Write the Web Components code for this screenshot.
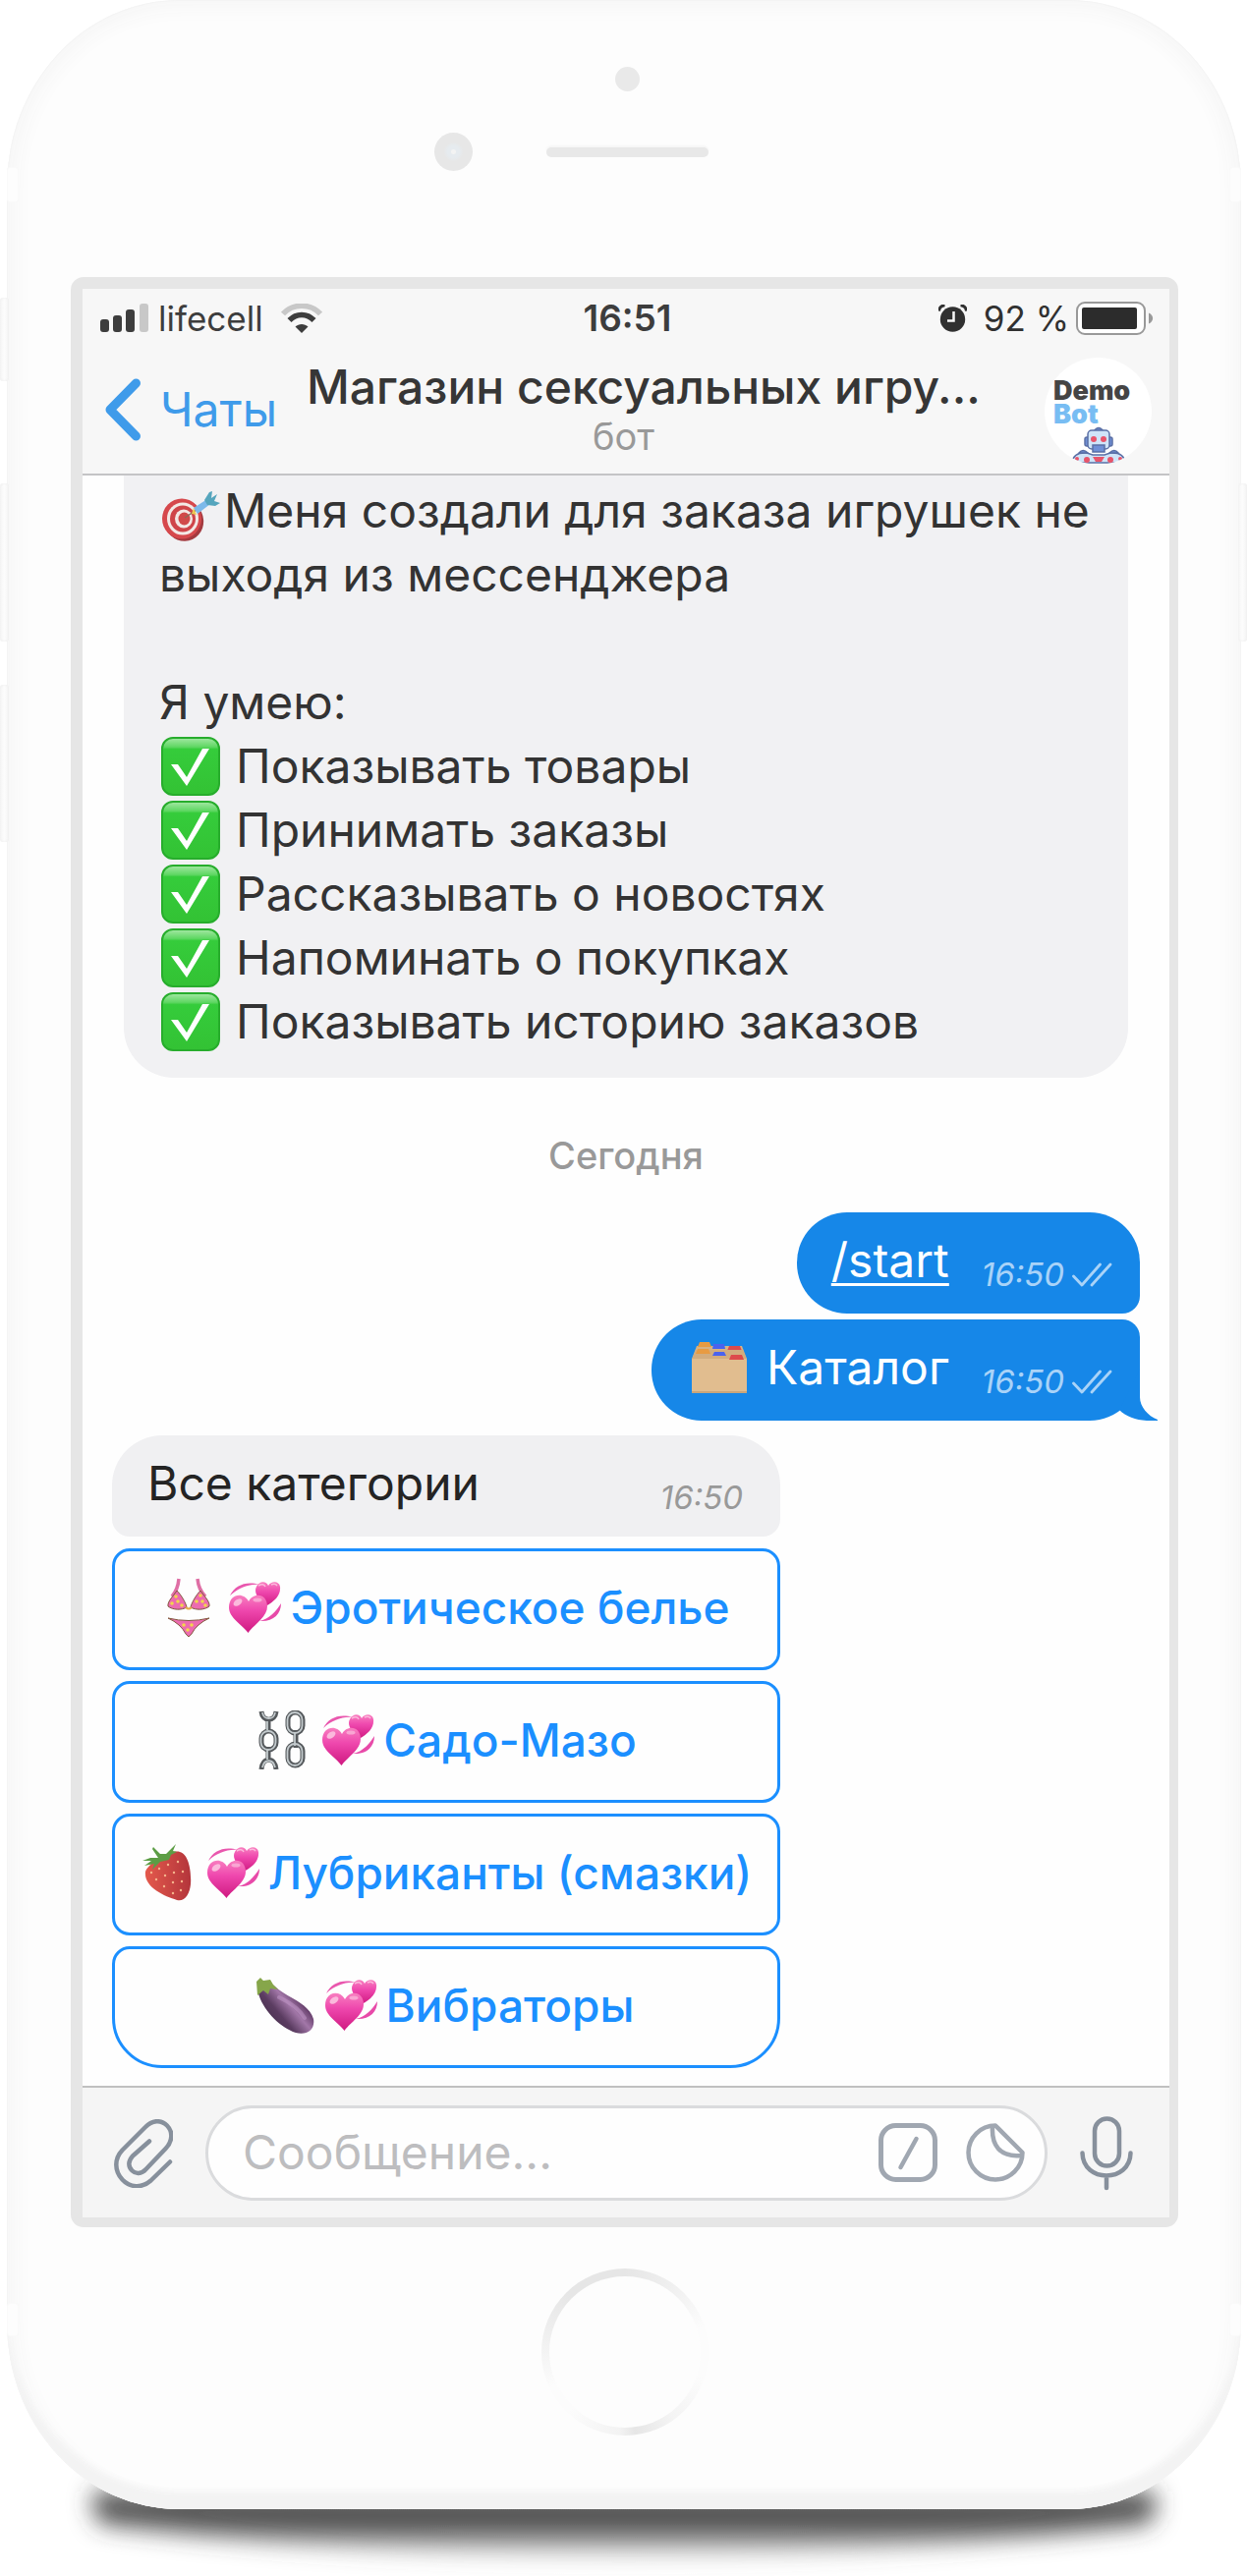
<!DOCTYPE html>
<html lang="ru">
<head>
<meta charset="utf-8">
<meta name="viewport" content="width=device-width, initial-scale=1">
<title>Чат с ботом</title>
<style>
  html { background: #fff; }
  body { margin: 0; font-family: Inter, "Liberation Sans", sans-serif; color: #2e2e2e; }
</style>
</head>
<body>
<phone-frame>
  <status-bar slot="top" carrier="lifecell" time="16:51" battery="92 %"></status-bar>
  <chat-header slot="top" back="Чаты" subtitle="бот">Магазин сексуальных игру...</chat-header>

  <chat-bubble kind="intro">
    <intro-text></intro-text>
  </chat-bubble>
  <day-label>Сегодня</day-label>
  <chat-bubble kind="out" time="16:50"><a href="#start" style="color:inherit;text-decoration-thickness:3px;text-underline-offset:6px">/start</a></chat-bubble>
  <chat-bubble kind="out" last time="16:50" icon="folder">Каталог</chat-bubble>
  <chat-bubble kind="in" time="16:50">Все категории</chat-bubble>
  <inline-keyboard>
    <key-button icon="bikini">Эротическое белье</key-button>
    <key-button icon="chains">Садо-Мазо</key-button>
    <key-button icon="strawberry">Лубриканты (смазки)</key-button>
    <key-button icon="eggplant" last>Вибраторы</key-button>
  </inline-keyboard>

  <message-composer slot="bottom"></message-composer>
</phone-frame>

<script>
const ICONS = {
  signal: [49, 30, `<g fill="#3d3d3d"><rect x="0" y="16" width="9" height="13" rx="3"/><rect x="13" y="12" width="9" height="17" rx="3"/><rect x="26" y="6" width="9" height="23" rx="3"/></g><rect x="40" y="0" width="9" height="29" rx="3" fill="#c8c8c8"/>`],
  wifi: [42, 30, `<path d="M2 10.500C12-.5 30-.5 40 10.500" fill="none" stroke="#c8c8c8" stroke-width="5.500"/><path d="M8.500 17C15.500 9.500 26.500 9.500 33.500 17" fill="none" stroke="#3d3d3d" stroke-width="5.500"/><path d="M21 30L14.500 23.500C18 20 24 20 27.500 23.500Z" fill="#3d3d3d"/>`],
  alarm: [29, 28, `<circle cx="14.500" cy="15" r="12.700" fill="#303030"/><path d="M.5 6.500C1 3 3.500 1 6.500.8M28.500 6.500C28 3 25.500 1 22.500.8" fill="none" stroke="#303030" stroke-width="3"/><path d="M15.500 7v9.500H9" fill="none" stroke="#f7f7f7" stroke-width="2.500"/>`],
  battery: [80, 34, `<rect x="1" y="1" width="69" height="32" rx="8" fill="#fff" stroke="#999" stroke-width="2"/><rect x="6" y="6" width="56" height="22" rx="2" fill="#2c2c2c"/><path d="M74 11.500C79.500 14 79.500 20 74 22.500Z" fill="#999"/>`],
  back: [38, 64, `<path d="M32.500 5L6 32L32.500 59" fill="none" stroke="#3f9bea" stroke-width="9" stroke-linecap="round" stroke-linejoin="round"/>`],
  check: [60, 60, `<defs><linearGradient id="g" x1="0" y1="0" x2="0" y2="1"><stop offset="0" stop-color="#a5e8a5"/><stop offset=".16" stop-color="#5fd763"/><stop offset=".2" stop-color="#35cc3b"/><stop offset="1" stop-color="#33c234"/></linearGradient></defs><rect x="1" y="1" width="58" height="58" rx="11" fill="url(#g)" stroke="#27ad2c" stroke-width="2"/><path d="M10 28H17L26 41L42 12H49L26 50Z" fill="#fff"/>`],
  dart: [60, 52, `<ellipse cx="23" cy="30" rx="20" ry="21" transform="rotate(-25 23 30)" fill="#a33a3f"/><ellipse cx="21" cy="28" rx="20" ry="20.500" fill="#d6484c"/><ellipse cx="22" cy="28" rx="16" ry="16.500" fill="#f3e9e6"/><ellipse cx="22" cy="28" rx="13" ry="13.500" fill="#cf4549"/><ellipse cx="23" cy="28" rx="9" ry="9.500" fill="#f3e9e6"/><ellipse cx="23.500" cy="28" rx="6" ry="6.500" fill="#d14a4a"/><path d="M24 27L36 19" stroke="#8a6a58" stroke-width="1.500"/><path d="M31 23L33 17L36 24Z" fill="#ecc951"/><path d="M33 17L47 8L50 13L37 23Z" fill="#7cb9ea"/><path d="M44 9L49 1L52 0L51 7L57 3L54 10L60 12L55 15L47 14Z" fill="#55a5bd"/>`],
  folder: [56, 52, `<path d="M5 4H51L56 17V52H0V17Z" fill="#d8b283"/><path d="M8 0H18L20 5H6Z" fill="#e89b42"/><path d="M22 2H33L34 7H21Z" fill="#4a63ef"/><path d="M38 4H49L51 9H36Z" fill="#dd4a4c"/><path d="M4 8H52L56 18H0Z" fill="#d2ac7e"/><path d="M6 7H17L19 12H4Z" fill="#e89b42"/><path d="M23 10H33L35 14H21Z" fill="#4a63ef"/><rect y="17" width="56" height="35" rx="1" fill="#e1bd8f"/><path d="M40 13H51L53 18H38Z" fill="#dd4a4c"/><path d="M0 51H56" stroke="#c9a57a" stroke-width="2"/>`],
  hearts: [53, 52, `<defs><linearGradient id="h" x1="0" y1="0" x2="0" y2="1"><stop offset="0" stop-color="#f87fc0"/><stop offset=".4" stop-color="#ef48ae"/><stop offset="1" stop-color="#cf1880"/></linearGradient></defs><path d="M1 14C6 4 17-1 31 3C20 2 10 6 1 14Z" fill="#e957ae"/><path d="M31 40C41 38 48 30 53 22C53 33 45 41 31 40Z" fill="#e84aa9"/><path d="M37 25C29 17 25 10 28 5C31-1 38-1 40 4C43-1 51-1 52 5C53 13 47 20 37 25Z" fill="url(#h)"/><path d="M19.500 52C13 43 0 37 0 26C0 12 15 10 20 20C25 10 39 12 39 25C39 36 26 43 19.500 52Z" fill="url(#h)"/><ellipse cx="9" cy="21" rx="5" ry="3" transform="rotate(-35 9 21)" fill="#fbb9dc"/><ellipse cx="29" cy="18.500" rx="4.500" ry="2" fill="#f9a6d3"/><path d="M30 4Q35 1 37 5M43 3Q47 1 49 4" fill="none" stroke="#fbb9dc" stroke-width="1.500"/>`],
  bikini: [44, 60, `<path d="M12 1Q11 12 5 19M31 1Q32 12 39 19" fill="none" stroke="#df6fa5" stroke-width="3.500"/><path d="M10 13C14 17 19 25 20 30C15 33 6 33 1 29C0 24 7 18 10 13ZM34 13C30 17 25 25 24 30C29 33 38 33 43 29C44 24 37 18 34 13Z" fill="#ec6bb0" stroke="#84583f" stroke-width="1"/><path d="M19 30Q22 33 25 30" fill="none" stroke="#e3ad4a" stroke-width="2"/><path d="M1 41Q22 46 43 41Q30 47 25 57L22 60L19 57Q14 47 1 41Z" fill="#ec6bb0" stroke="#84583f" stroke-width="1"/><g fill="#f3d64b"><circle cx="9" cy="19" r="1.800"/><circle cx="5" cy="26" r="1.800"/><circle cx="11" cy="24" r="1.800"/><circle cx="15" cy="28" r="1.800"/><circle cx="34" cy="18" r="1.800"/><circle cx="30" cy="24" r="1.800"/><circle cx="36" cy="24" r="1.800"/><circle cx="39" cy="28" r="1.800"/><circle cx="17" cy="48" r="1.800"/><circle cx="25" cy="48" r="1.800"/><circle cx="21" cy="53" r="1.800"/></g>`],
  chains: [48, 60, `<g fill="none" stroke="#55595c" stroke-width="5"><path d="M3 1C4 12 17 12 18 1M10 8V22"/><rect x="3" y="21" width="15" height="19" rx="7.500"/><path d="M10 37V52M3 60C4 47 17 47 18 60"/><rect x="30" y="2" width="15" height="21" rx="7.500"/><path d="M38 20V38"/><rect x="30" y="34" width="15" height="22" rx="7.500"/></g><g fill="none" stroke="#c3cacd" stroke-width="1.800"><path d="M4 2C5 10 16 10 17 2M9 11V20"/><rect x="2.500" y="21" width="15" height="19" rx="7.500"/><path d="M9 40V50M4 58C6 49 15 49 17 58"/><rect x="29.500" y="2" width="15" height="21" rx="7.500"/><path d="M37 23V36"/><rect x="29.500" y="34" width="15" height="22" rx="7.500"/></g>`],
  strawberry: [50, 58, `<defs><linearGradient id="s"><stop offset="0" stop-color="#e4594c"/><stop offset="1" stop-color="#b3353b"/></linearGradient></defs><path d="M3 28C8 17 30 5 38 8C47 10 50 28 49 41C48 51 43 59 35 57C22 53 1 44 3 28Z" fill="url(#s)"/><path d="M0 17L9 17L2 22L12 20L10 26L18 18L27 16L29 11L35 8L31 7L34 0L24 10L18 10L11 3L10 5L16 14L8 14Z" fill="#5c9d45"/><g fill="#f5b58d"><circle cx="9" cy="29" r="1.200"/><circle cx="17" cy="25" r="1.200"/><circle cx="26" cy="21" r="1.200"/><circle cx="36" cy="18" r="1.200"/><circle cx="14" cy="36" r="1.200"/><circle cx="23" cy="32" r="1.200"/><circle cx="32" cy="29" r="1.200"/><circle cx="41" cy="28" r="1.200"/><circle cx="22" cy="43" r="1.200"/><circle cx="31" cy="39" r="1.200"/><circle cx="40" cy="38" r="1.200"/><circle cx="31" cy="50" r="1.200"/><circle cx="39" cy="47" r="1.200"/></g>`],
  eggplant: [60, 57, `<defs><linearGradient id="e" x1="0" y1="1" x2=".8" y2=".4"><stop offset="0" stop-color="#34253b"/><stop offset=".55" stop-color="#5b3c61"/><stop offset=".8" stop-color="#a277a8"/><stop offset="1" stop-color="#67406c"/></linearGradient></defs><path d="M2 12C5 6 15 4 20 9C31 20 54 25 59 42C61 53 52 59 41 56C23 50 5 30 2 12Z" fill="url(#e)"/><path d="M1 4L5 0L8 3L15 2L18 7L23 12L15 11L13 17L8 13L2 18Z" fill="#86a64a"/><path d="M24 20Q43 29 50 41" stroke="#c49aca" stroke-width="4" fill="none" opacity=".5" stroke-linecap="round"/>`],
  ticks: [41, 25, `<path d="M1.500 14L10 23L28.500 2M20 23L39 2" fill="none" stroke="#a9d3f8" stroke-width="2.800" stroke-linecap="round" stroke-linejoin="round"/>`],
  clip: [60, 70, `<path d="M57 43.500L37.500 62.500C28 71 16 69.500 8.500 61.500C0 52 .5 40 8.500 31.500L32 8C39 .5 48 .5 54 6.500C60 12.500 60 22 52.500 30L32.500 51C28 56 22 56 18.500 52.500C14 48 14.500 42.500 19 37.500L36 22.500" fill="none" stroke="#87909c" stroke-width="4.500" stroke-linecap="round" stroke-linejoin="round"/>`],
  slash: [60, 60, `<rect x="2.500" y="2.500" width="55" height="55" rx="15" fill="none" stroke="#a0a7b1" stroke-width="5"/><path d="M38.500 16L22.500 45" stroke="#a0a7b1" stroke-width="4.500" stroke-linecap="round"/>`],
  sticker: [60, 60, `<path d="M30 2.500A27.500 27.500 0 1 0 57.500 30Z" fill="none" stroke="#a0a7b1" stroke-width="4.500" stroke-linejoin="round"/><path d="M27 4C26 22 34 35 56 33" fill="none" stroke="#a0a7b1" stroke-width="4.500" stroke-linecap="round"/>`],
  mic: [54, 76, `<rect x="15" y="2.500" width="25" height="48" rx="12.500" fill="none" stroke="#87909c" stroke-width="4.500"/><path d="M2.500 37.500C3 68 51 68 51.500 37.500M27 61V73" fill="none" stroke="#87909c" stroke-width="4.500" stroke-linecap="round"/>`],
  tail: [48, 52, `<path d="M30 0V28C30 38 38 47 48 51V52C32 53 18 50 9 41Z" fill="#1687e8"/>`],
  robot: [56, 38, `<g stroke="#5a6fa5" stroke-width="1.500"><path d="M23 5Q28-2 33 5Z" fill="#6f8fd6"/><rect x="14" y="11" width="28" height="9" rx="2" fill="#6f8fd6"/><rect x="17" y="4" width="22" height="19" rx="4" fill="#cfe4f8"/><path d="M22 19H34V26H22Z" fill="#6f8fd6"/><path d="M1 37Q2 26 16 27L22 29H34L40 27Q54 26 55 37Z" fill="#cfe4f8"/><path d="M8 27Q12 22 17 27ZM39 27Q44 22 48 27Z" fill="#6f8fd6"/></g><g fill="#e8546a"><circle cx="23" cy="13" r="3"/><circle cx="33" cy="13" r="3"/><path d="M22 31H34L31 36H25Z"/><circle cx="16" cy="34" r="3"/><circle cx="40" cy="34" r="3"/><circle cx="6" cy="33" r="2"/><circle cx="50" cy="33" r="2"/></g>`],
  shadow: [1269, 130, `<defs><filter id="b" x="-10%" y="-60%" width="120%" height="240%"><feGaussianBlur stdDeviation="12"/></filter><linearGradient id="d" x1="0" y1="0" x2="0" y2="1"><stop offset="0" stop-color="#3c3c3c" stop-opacity=".9"/><stop offset=".6" stop-color="#3c3c3c" stop-opacity=".85"/><stop offset="1" stop-color="#777" stop-opacity=".15"/></linearGradient></defs><path d="M96 44Q90 74 110 78Q635 140 1160 78Q1182 74 1174 44Z" fill="url(#d)" filter="url(#b)"/>`]
};

function define(name, render) {
  customElements.define(name, class extends HTMLElement {
    connectedCallback() {
      if (this.shadowRoot) return;
      const t = document.createElement('template');
      t.innerHTML = render(this);
      this.attachShadow({ mode: 'open' }).append(t.content.cloneNode(true));
    }
  });
}

define('ui-icon', el => {
  const [w, h, body] = ICONS[el.getAttribute('name')];
  return `<style>:host{display:block;flex:none}svg{display:block}</style>
    <svg width="${w}" height="${h}" viewBox="0 0 ${w} ${h}" aria-hidden="true">${body}</svg>`;
});

define('phone-frame', () => `
  <style>
    :host { display: block; overflow: hidden; }
    .body { position: relative; z-index: 1; margin: 0 6px 0 7px; padding: 0 64px 0 65px;
      border-radius: 175px / 190px; background: #fdfdfd;
      box-shadow: inset 0 0 0 1px #f4f4f4, inset 0 -20px 6px -2px #f3f3f3, inset 0 0 20px 8px #f6f6f6; }
    .side, .band { position: absolute; width: 9px; border-radius: 3px; }
    .side { background: linear-gradient(90deg, #f6f6f6, #fcfcfc 50%, #f4f4f4); box-shadow: inset 0 0 3px #eee; }
    .side.l { left: -7px; } .side.r { right: -6px; }
    .band { width: 12px; background: #fdfdfd; box-shadow: inset 0 0 2px #f2f2f2; }
    .band.l { left: 0; } .band.r { right: 0; }
    .top { display: grid; grid-template-columns: 1fr 165px 1fr; row-gap: 42px; align-items: center;
      height: 282px; padding: 68px 0 0 5px; box-sizing: border-box; align-content: start; }
    .sensor { grid-column: 2; justify-self: center; width: 25px; height: 25px; border-radius: 50%; background: #e9e9e9; }
    .camera { grid-column: 1; justify-self: end; margin-right: 75px; width: 39px; height: 39px; border-radius: 50%;
      background: radial-gradient(circle, #f3f3f3 0 2px, #e6ebef 3px 6px, #e7e7e7 10px); }
    .speaker { height: 10px; border-radius: 5px; background: #e8e8e8; box-shadow: 0 -2px 2px #f6f6f6; }
    .screen { border: solid #e6e6e6; border-width: 12px 9px 10px 12px; border-radius: 13px; background: #fefefe; }
    main { display: flex; flex-direction: column; align-items: stretch; padding-bottom: 18px; }
    .bottom { display: flex; justify-content: center; padding: 42px 0 75px; }
    .home { width: 170px; height: 170px; box-sizing: border-box; padding: 8px; border: 0; border-radius: 50%;
      background: conic-gradient(#e6e6e6, #f2f2f2 12%, #fcfcfc 20% 30%, #f4f4f4 40%, #e6e6e6 48%, #f3f3f3 51%, #fcfcfc 62% 68%, #f0f0f0 78%, #e6e6e6 88%); }
    .home span { display: block; height: 100%; border-radius: 50%; background: #fdfdfd; }
    .shade { display: flex; justify-content: center; margin-top: -62px; }
  </style>
  <div class="body">
    <span class="side l" style="top:303px;height:85px"></span>
    <span class="side l" style="top:492px;height:161px"></span>
    <span class="side l" style="top:697px;height:160px"></span>
    <span class="side r" style="top:492px;height:161px"></span>
    <span class="band l" style="top:170px;height:36px"></span>
    <span class="band r" style="top:170px;height:36px"></span>
    <span class="band l" style="bottom:176px;height:34px"></span>
    <span class="band r" style="bottom:176px;height:34px"></span>
    <div class="top"><span class="sensor"></span><span class="camera"></span><span class="speaker"></span></div>
    <div class="screen">
      <slot name="top"></slot>
      <main><slot></slot></main>
      <slot name="bottom"></slot>
    </div>
    <div class="bottom"><button class="home" aria-label="Home"><span></span></button></div>
  </div>
  <div class="shade"><ui-icon name="shadow"></ui-icon></div>`);

define('status-bar', el => `
  <style>
    :host { display: grid; grid-template-columns: 1fr auto 1fr; align-items: center; height: 60px;
      padding: 0 15px 0 18px; background: #f7f7f7; font-size: 35px; line-height: 60px; color: #3d3d3d; }
    div { display: flex; align-items: center; }
    .l { gap: 10px; } .r { justify-content: flex-end; gap: 7px; color: #303030; }
    .l ui-icon + span { margin-right: 8px; }
    .r ui-icon:first-child { margin-right: 10px; }
    b { font-size: 37px; font-weight: 600; }
  </style>
  <div class="l"><ui-icon name="signal"></ui-icon><span>${el.getAttribute('carrier')}</span><ui-icon name="wifi"></ui-icon></div>
  <b>${el.getAttribute('time')}</b>
  <div class="r"><ui-icon name="alarm"></ui-icon><span>${el.getAttribute('battery')}</span><ui-icon name="battery"></ui-icon></div>`);

define('chat-header', el => `
  <style>
    :host { display: flex; align-items: center; height: 128px; padding: 0 18px 0 22px; background: #f7f7f7;
      border-bottom: 2px solid #c4c4c6; font-size: 48px; }
    a { display: flex; align-items: center; gap: 19px; color: #3f9bea; text-decoration: none; line-height: 56px; padding-bottom: 2px; }
    .mid { flex: 1; min-width: 0; padding: 2px 0 0 30px; }
    h1 { margin: 0; font-size: 48px; line-height: 50px; font-weight: 500; color: #363636; white-space: nowrap; }
    p { margin: 0 106px 0 0; font-size: 38px; line-height: 50px; color: #999; text-align: center; }
    .avatar { display: flex; flex-direction: column; align-items: center; flex: none; width: 109px; height: 109px; border-radius: 50%;
      overflow: hidden; background: #fff; box-sizing: border-box; padding-top: 22px; font-size: 27px; line-height: 24px; font-weight: 900; color: #454545; }
    .name { width: 91px; } .name span { display: block; } .name span + span { color: #78bdf3; }
  </style>
  <a href="#chats"><ui-icon name="back"></ui-icon>${el.getAttribute('back')}</a>
  <div class="mid"><h1><slot></slot></h1><p>${el.getAttribute('subtitle')}</p></div>
  <div class="avatar"><div class="name"><span>Demo</span><span>Bot</span></div><ui-icon name="robot"></ui-icon></div>`);

define('intro-text', () => `
  <style>
    :host { display: block; font-size: 48px; line-height: 65px; color: #333; }
    p { margin: 0; } p + p { margin-top: 65px; }
    .lead { display: flex; align-items: center; gap: 4px; }
    .lead ui-icon { align-self: flex-end; }
    ul { list-style: none; margin: 0; padding: 0; }
    li { display: flex; align-items: center; gap: 16px; }
    .lead ui-icon, li ui-icon { margin-left: 2px; }
  </style>
  <div class="lead"><ui-icon name="dart"></ui-icon><span>Меня создали для заказа игрушек не</span></div>
  <p>выходя из мессенджера</p>
  <p>Я умею:</p>
  <ul>${['Показывать товары', 'Принимать заказы', 'Рассказывать о новостях', 'Напоминать о покупках', 'Показывать историю заказов']
    .map(t => `<li><ui-icon name="check"></ui-icon><span>${t}</span></li>`).join('')}</ul>`);

define('day-label', () => `
  <style>:host{display:block;margin:54px 0 33px;text-align:center;font-size:38px;line-height:50px;font-weight:500;color:#999}</style><slot></slot>`);

define('chat-bubble', el => {
  const time = el.getAttribute('time'), icon = el.getAttribute('icon'), out = el.getAttribute('kind') === 'out';
  return `
  <style>
    :host { display: flex; align-items: flex-end; position: relative; box-sizing: border-box; font-size: 48px; line-height: 65px; white-space: nowrap; }
    :host([kind=intro]) { display: block; margin: 0 42px; padding: 3px 34px 25px 36px; border-radius: 0 0 51px 51px; background: #f1f1f3; }
    :host([kind=in]) { justify-content: space-between; width: min(680px, 100% - 60px); margin: 15px 30px 12px; padding: 16px 38px 22px 36px;
      border-radius: 51px 51px 18px 18px; background: #f0f0f2; color: #242424; }
    :host([kind=out]) { align-self: flex-end; margin-right: 30px; padding: 16px 28px 22px 35px;
      border-radius: 51px 51px 18px 51px; background: #1687e8; color: #fff; }
    :host([last]) { margin-top: 6px; border-radius: 51px 18px 51px 51px; }
    .text { display: flex; align-items: center; gap: 20px; }
    .text ui-icon { margin-left: 6px; }
    .meta { display: flex; align-items: center; gap: 8px; margin-left: 33px; font-size: 33px; line-height: 36px; font-style: italic; color: #999; }
    :host([kind=out]) .meta { color: #a9d3f8; }
    .tail { position: absolute; right: -18px; bottom: 0; }
  </style>
  <div class="text">${icon ? `<ui-icon name="${icon}"></ui-icon>` : ''}<span><slot></slot></span></div>
  ${time ? `<div class="meta"><time>${time}</time>${out ? '<ui-icon name="ticks"></ui-icon>' : ''}</div>` : ''}
  ${el.hasAttribute('last') ? '<ui-icon class="tail" name="tail"></ui-icon>' : ''}`;
});

define('inline-keyboard', () => `
  <style>:host{display:flex;flex-direction:column;gap:11px;width:min(680px, 100% - 60px);margin:0 30px}</style><slot></slot>`);

define('key-button', el => `
  <style>
    :host { display: block; }
    button { display: flex; align-items: center; justify-content: center; width: 100%; height: 124px; padding: 0 3px 4px 0; box-sizing: border-box;
      border: 3px solid #1b8fff; border-radius: 18px; background: #fefefe; color: #1b8fff; font: 500 46px/60px Inter, "Liberation Sans", sans-serif; white-space: nowrap; }
    :host([last]) button { border-radius: 18px 18px 51px 51px; }
    .first { display: flex; justify-content: center; width: 60px; }
    .second { margin: 0 9px 0 11px; }
  </style>
  <button type="button"><span class="first"><ui-icon name="${el.getAttribute('icon')}"></ui-icon></span><ui-icon class="second" name="hearts"></ui-icon><span><slot></slot></span></button>`);

define('message-composer', () => `
  <style>
    :host { display: flex; align-items: center; gap: 33px; padding: 18px 37px 17px 32px; border-top: 2px solid #c0c0c0; background: #f5f5f5; }
    button { display: block; padding: 0; border: 0; background: none; }
    .field { display: flex; align-items: center; gap: 29px; flex: 1; min-width: 0; height: 97px; box-sizing: border-box; padding: 0 20px 2px 35px;
      border: 3px solid #dadbdd; border-radius: 49px; background: #fefefe; }
    input { flex: 1; min-width: 0; height: 65px; padding: 0; border: 0; outline: 0; background: none; font: 400 48px/65px Inter, "Liberation Sans", sans-serif; color: #333; }
    input::placeholder { color: #bdbdbf; opacity: 1; }
  </style>
  <button type="button" aria-label="Прикрепить"><ui-icon name="clip"></ui-icon></button>
  <div class="field">
    <input type="text" placeholder="Сообщение..." aria-label="Сообщение">
    <button type="button" aria-label="Команды"><ui-icon name="slash"></ui-icon></button>
    <button type="button" aria-label="Стикеры"><ui-icon name="sticker"></ui-icon></button>
  </div>
  <button type="button" aria-label="Голосовое сообщение"><ui-icon name="mic"></ui-icon></button>`);
</script>
</body>
</html>
